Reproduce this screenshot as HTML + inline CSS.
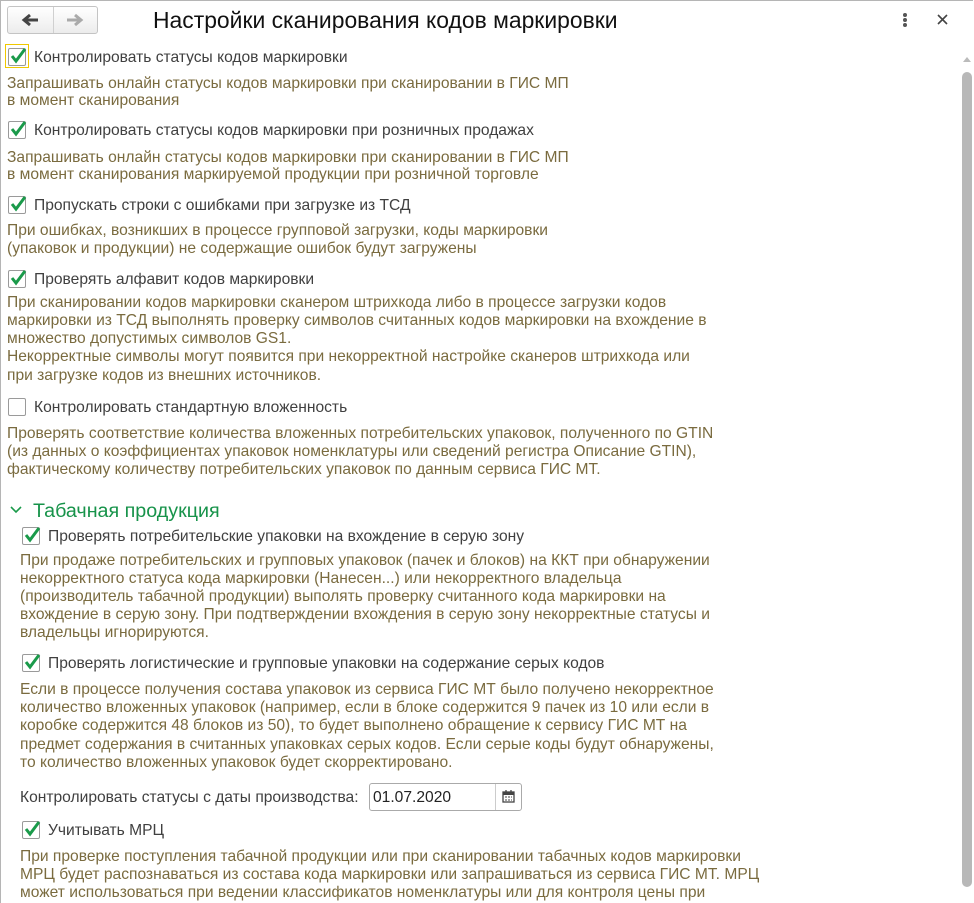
<!DOCTYPE html>
<html><head><meta charset="utf-8"><style>
body{margin:0;width:974px;height:903px;overflow:hidden;background:#fff;font-family:"Liberation Sans",Arial,sans-serif;position:relative}
.frame{position:absolute;left:0;top:0;width:973px;height:903px;border-left:1px solid #b5b5b5;border-top:1px solid #b5b5b5;box-sizing:border-box}
.t{position:absolute;white-space:nowrap;font-size:15.6px;line-height:18px;color:#404040}
.d{color:#7a6b3f}
.cb{position:absolute;width:16px;height:16px;border:1px solid #9a9a9a;border-radius:2px;background:#fff}
.cb svg{position:absolute;left:1px;top:-2px}
</style></head><body>
<div class="frame"></div>
<div style="position:absolute;left:7px;top:6px;width:91px;height:28px;border:1px solid #c4c4c4;border-radius:3px;background:linear-gradient(#fff,#ececec);box-sizing:border-box"></div>
<div style="position:absolute;left:53px;top:7px;width:1px;height:26px;background:#d0d0d0"></div>
<svg style="position:absolute;left:20px;top:12px" width="20" height="16"><path d="M18 8H5M10 3L4 8l6 5" stroke="#444" stroke-width="3" fill="none"/></svg>
<svg style="position:absolute;left:65px;top:12px" width="20" height="16"><path d="M2 8h13M10 3l6 5-6 5" stroke="#aaa" stroke-width="3" fill="none"/></svg>
<div class="t" style="left:153px;top:6px;font-size:22.9px;line-height:28px;color:#111">Настройки сканирования кодов маркировки</div>
<div style="position:absolute;left:903px;top:13px;width:4px;height:4px;border-radius:2px;background:#555;box-shadow:0 5px 0 #555,0 10px 0 #555"></div>
<svg style="position:absolute;left:937px;top:14px" width="11" height="11"><path d="M1 1l9 9M10 1l-9 9" stroke="#444" stroke-width="1.6"/></svg>
<div style="position:absolute;left:963px;top:57px;width:0;height:0;border-left:4px solid transparent;border-right:4px solid transparent;border-bottom:5px solid #bbb"></div>
<div style="position:absolute;left:962px;top:72px;width:10px;height:815px;border-radius:5px;background:#b8b8b8"></div>

<div style="position:absolute;left:5px;top:44px;width:24px;height:24px;border:1px solid #f0c800;box-sizing:border-box"></div>
<div class="t" style="left:34px;top:49px">Контролировать статусы кодов маркировки</div>
<div class="t d" style="left:7px;top:75px">Запрашивать онлайн статусы кодов маркировки при сканировании в ГИС МП</div>
<div class="t d" style="left:7px;top:92px">в момент сканирования</div>
<div class="t" style="left:34px;top:122px">Контролировать статусы кодов маркировки при розничных продажах</div>
<div class="t d" style="left:7px;top:149px">Запрашивать онлайн статусы кодов маркировки при сканировании в ГИС МП</div>
<div class="t d" style="left:7px;top:166px">в момент сканирования маркируемой продукции при розничной торговле</div>
<div class="t" style="left:34px;top:197px">Пропускать строки с ошибками при загрузке из ТСД</div>
<div class="t d" style="left:7px;top:222px">При ошибках, возникших в процессе групповой загрузки, коды маркировки</div>
<div class="t d" style="left:7px;top:240px">(упаковок и продукции) не содержащие ошибок будут загружены</div>
<div class="t" style="left:34px;top:271px">Проверять алфавит кодов маркировки</div>
<div class="t d" style="left:7px;top:294px">При сканировании кодов маркировки сканером штрихкода либо в процессе загрузки кодов</div>
<div class="t d" style="left:7px;top:312px">маркировки из ТСД выполнять проверку символов считанных кодов маркировки на вхождение в</div>
<div class="t d" style="left:7px;top:330px">множество допустимых символов GS1.</div>
<div class="t d" style="left:7px;top:348px">Некорректные символы могут появится при некорректной настройке сканеров штрихкода или</div>
<div class="t d" style="left:7px;top:367px">при загрузке кодов из внешних источников.</div>
<div class="t" style="left:34px;top:399px">Контролировать стандартную вложенность</div>
<div class="t d" style="left:7px;top:425px">Проверять соответствие количества вложенных потребительских упаковок, полученного по GTIN</div>
<div class="t d" style="left:7px;top:443px">(из данных о коэффициентах упаковок номенклатуры или сведений регистра Описание GTIN),</div>
<div class="t d" style="left:7px;top:461px">фактическому количеству потребительских упаковок по данным сервиса ГИС МТ.</div>
<svg style="position:absolute;left:10px;top:505px" width="12" height="10"><path d="M1 2l5 5 5-5" stroke="#1a9a4a" stroke-width="1.6" fill="none"/></svg>
<div class="t" style="left:33px;top:499px;font-size:19.7px;line-height:24px;color:#17934a">Табачная продукция</div>
<div class="t" style="left:48px;top:528px">Проверять потребительские упаковки на вхождение в серую зону</div>
<div class="t d" style="left:20px;top:552px">При продаже потребительских и групповых упаковок (пачек и блоков) на ККТ при обнаружении</div>
<div class="t d" style="left:20px;top:570px">некорректного статуса кода маркировки (Нанесен...) или некорректного владельца</div>
<div class="t d" style="left:20px;top:588px">(производитель табачной продукции) выполять проверку считанного кода маркировки на</div>
<div class="t d" style="left:20px;top:606px">вхождение в серую зону. При подтверждении вхождения в серую зону некорректные статусы и</div>
<div class="t d" style="left:20px;top:624px">владельцы игнорируются.</div>
<div class="t" style="left:48px;top:655px">Проверять логистические и групповые упаковки на содержание серых кодов</div>
<div class="t d" style="left:20px;top:681px">Если в процессе получения состава упаковок из сервиса ГИС МТ было получено некорректное</div>
<div class="t d" style="left:20px;top:699px">количество вложенных упаковок (например, если в блоке содержится 9 пачек из 10 или если в</div>
<div class="t d" style="left:20px;top:717px">коробке содержится 48 блоков из 50), то будет выполнено обращение к сервису ГИС МТ на</div>
<div class="t d" style="left:20px;top:736px">предмет содержания в считанных упаковках серых кодов. Если серые коды будут обнаружены,</div>
<div class="t d" style="left:20px;top:754px">то количество вложенных упаковок будет скорректировано.</div>
<div class="t" style="left:20px;top:789px">Контролировать статусы с даты производства:</div>
<div style="position:absolute;left:369px;top:783px;width:153px;height:28px;border:1px solid #aaa;border-radius:3px;box-sizing:border-box"></div>
<div style="position:absolute;left:495px;top:784px;width:1px;height:26px;background:#ccc"></div>
<div class="t" style="left:373px;top:789px;color:#222">01.07.2020</div>
<svg style="position:absolute;left:502px;top:790px" width="13" height="13"><rect x="1" y="2" width="11" height="10" fill="none" stroke="#444" stroke-width="1.3"/><rect x="1" y="2" width="11" height="3" fill="#444"/><path d="M3 7h2M6 7h2M9 7h1M3 10h2M6 10h2M9 10h1" stroke="#444"/><path d="M4 0v3M9 0v3" stroke="#444" stroke-width="1.3"/></svg>
<div class="t" style="left:48px;top:822px">Учитывать МРЦ</div>
<div class="t d" style="left:20px;top:848px">При проверке поступления табачной продукции или при сканировании табачных кодов маркировки</div>
<div class="t d" style="left:20px;top:866px">МРЦ будет распознаваться из состава кода маркировки или запрашиваться из сервиса ГИС МТ. МРЦ</div>
<div class="t d" style="left:20px;top:884px">может использоваться при ведении классификатов номенклатуры или для контроля цены при</div>

<div class="cb" style="left:8px;top:48px"><svg width="18" height="18"><path d="M2 9l4 5 9-12" stroke="#1a9a4a" stroke-width="3" fill="none"/></svg></div>
<div class="cb" style="left:8px;top:121px"><svg width="18" height="18"><path d="M2 9l4 5 9-12" stroke="#1a9a4a" stroke-width="3" fill="none"/></svg></div>
<div class="cb" style="left:8px;top:196px"><svg width="18" height="18"><path d="M2 9l4 5 9-12" stroke="#1a9a4a" stroke-width="3" fill="none"/></svg></div>
<div class="cb" style="left:8px;top:270px"><svg width="18" height="18"><path d="M2 9l4 5 9-12" stroke="#1a9a4a" stroke-width="3" fill="none"/></svg></div>
<div class="cb" style="left:8px;top:398px"></div>
<div class="cb" style="left:22px;top:527px"><svg width="18" height="18"><path d="M2 9l4 5 9-12" stroke="#1a9a4a" stroke-width="3" fill="none"/></svg></div>
<div class="cb" style="left:22px;top:654px"><svg width="18" height="18"><path d="M2 9l4 5 9-12" stroke="#1a9a4a" stroke-width="3" fill="none"/></svg></div>
<div class="cb" style="left:22px;top:821px"><svg width="18" height="18"><path d="M2 9l4 5 9-12" stroke="#1a9a4a" stroke-width="3" fill="none"/></svg></div>
</body></html>
